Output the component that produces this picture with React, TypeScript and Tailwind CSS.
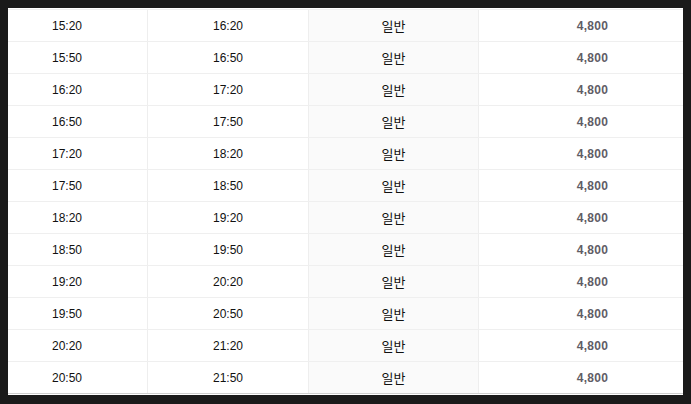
const rows = [
  ["15:20", "16:20"],
  ["15:50", "16:50"],
  ["16:20", "17:20"],
  ["16:50", "17:50"],
  ["17:20", "18:20"],
  ["17:50", "18:50"],
  ["18:20", "19:20"],
  ["18:50", "19:50"],
  ["19:20", "20:20"],
  ["19:50", "20:50"],
  ["20:20", "21:20"],
  ["20:50", "21:50"],
];

export default function App() {
  return (
    <div className="h-[404px] w-[691px] bg-[#1a1a1a] pt-2 px-2 font-['Liberation_Sans',Arial,sans-serif]">
      <div className="w-[675px] overflow-hidden bg-white pt-px pb-px">
        <div className="ml-[-21px] w-[720px] border-t border-[#f0f0f0]">
          {rows.map(([start, end], i) => (
            <div
              key={start}
              className={`flex h-[32px] border-b ${i === rows.length - 1 ? "border-[#cfcfcf]" : "border-[#efefef]"}`}
            >
              <div className="flex w-[161px] items-center justify-center border-r border-[#eeeeee] text-[12px] text-[#111]">
                {start}
              </div>
              <div className="flex w-[161px] items-center justify-center border-r border-[#eeeeee] text-[12px] text-[#111]">
                {end}
              </div>
              <div className="flex w-[170px] items-center justify-center border-r border-[#eeeeee] bg-[#fafafa] font-['Noto_Sans_CJK_KR',sans-serif] text-[13px] text-[#111]">
                일반
              </div>
              <div className="flex w-[227px] items-center justify-center text-[12px] font-bold tracking-[0.3px] text-[#5f5d66]">
                4,800
              </div>
            </div>
          ))}
        </div>
      </div>
    </div>
  );
}
